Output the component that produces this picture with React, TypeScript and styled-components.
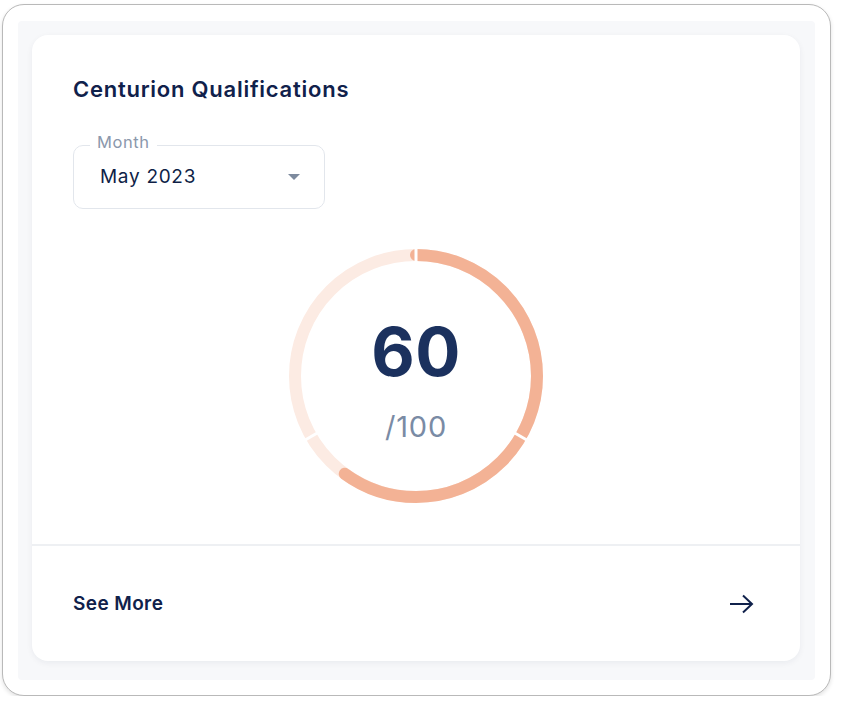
import styled, { createGlobalStyle } from "styled-components";

const GlobalStyle = createGlobalStyle`
  body {
    margin: 0;
    background: #ffffff;
    font-family: Inter, "Noto Sans", sans-serif;
  }
`;

const Frame = styled.div`
  box-sizing: border-box;
  width: 829px;
  height: 692px;
  margin: 4px 0 0 2px;
  padding: 16px 15px 15px 15px;
  border: 1.5px solid #b9b9b9;
  border-radius: 22px;
  background: #ffffff;
  box-shadow: 0 2px 4px rgba(0, 0, 0, 0.12);
`;

const Panel = styled.div`
  box-sizing: border-box;
  height: 100%;
  padding: 14px 15px 19px 14px;
  background: #f7f8fa;
  border-radius: 4px;
`;

const Card = styled.div`
  height: 100%;
  display: flex;
  flex-direction: column;
  background: #ffffff;
  border-radius: 16px;
  box-shadow: 0 2px 6px rgba(20, 35, 70, 0.06);
  overflow: hidden;
`;

const Body = styled.div`
  padding: 41px 41px 0 41px;
  display: flex;
  flex-direction: column;
  height: 509px;
  box-sizing: border-box;
`;

const Title = styled.h2`
  margin: 0;
  font-size: 22px;
  line-height: 26px;
  font-weight: 600;
  letter-spacing: 0.75px;
  color: #10214b;
`;

const Select = styled.div`
  position: relative;
  box-sizing: border-box;
  width: 252px;
  height: 64px;
  margin-top: 43px;
  padding: 0 24px 0 26px;
  display: flex;
  align-items: center;
  justify-content: space-between;
  border: 1px solid #e2e6ec;
  border-radius: 10px;
  background: #ffffff;
`;

const SelectLabel = styled.span`
  position: absolute;
  top: -14px;
  left: 16px;
  padding: 0 7px;
  background: #ffffff;
  font-size: 16.5px;
  line-height: 20px;
  letter-spacing: 0.6px;
  color: #8b98ac;
`;

const SelectValue = styled.span`
  font-size: 19px;
  line-height: 24px;
  letter-spacing: 0.7px;
  color: #0f1f47;
`;

const Caret = styled.span`
  width: 0;
  height: 0;
  border-left: 6px solid transparent;
  border-right: 6px solid transparent;
  border-top: 6px solid #7d8a9e;
`;

const GaugeWrap = styled.div`
  position: relative;
  align-self: center;
  width: 254px;
  height: 254px;
  margin-top: 40px;
`;

const GaugeText = styled.div`
  position: absolute;
  inset: 0;
  display: flex;
  flex-direction: column;
  align-items: center;
  justify-content: center;
`;

const Score = styled.div`
  font-size: 67px;
  line-height: 70px;
  font-weight: 700;
  letter-spacing: 0.5px;
  color: #1b315e;
  margin-top: 9px;
`;

const Total = styled.div`
  font-size: 29px;
  line-height: 34px;
  letter-spacing: 0.8px;
  color: #7a8ba5;
  margin-top: 23px;
`;

const Footer = styled.div`
  flex: 1;
  display: flex;
  align-items: center;
  justify-content: space-between;
  padding: 0 46px 0 41px;
  border-top: 2px solid #eef0f3;
`;

const FooterLink = styled.span`
  font-size: 19px;
  font-weight: 600;
  letter-spacing: 0.4px;
  color: #10214b;
`;

function Gauge({ value, max }: { value: number; max: number }) {
  const size = 254;
  const r = 121;
  const c = 2 * Math.PI * r;
  const progress = (value / max) * c;
  const cx = size / 2;
  const seps = [0, 120, 240];
  return (
    <svg width={size} height={size} viewBox={`0 0 ${size} ${size}`}>
      <circle cx={cx} cy={cx} r={r} fill="none" stroke="#fcebe3" strokeWidth={12} />
      <circle
        cx={cx}
        cy={cx}
        r={r}
        fill="none"
        stroke="#f3b295"
        strokeWidth={12}
        strokeLinecap="round"
        strokeDasharray={`${progress} ${c}`}
        transform={`rotate(-90 ${cx} ${cx})`}
      />
      {seps.map((a) => {
        const rad = (a * Math.PI) / 180;
        const x1 = cx + 112 * Math.sin(rad);
        const y1 = cx - 112 * Math.cos(rad);
        const x2 = cx + 130 * Math.sin(rad);
        const y2 = cx - 130 * Math.cos(rad);
        return <line key={a} x1={x1} y1={y1} x2={x2} y2={y2} stroke="#ffffff" strokeWidth={3} />;
      })}
    </svg>
  );
}

function Arrow() {
  return (
    <svg width="25" height="20" viewBox="0 0 25 20" fill="none">
      <path d="M1 10H23M14 1.5L23 10L14 18.5" stroke="#10214b" strokeWidth="2" />
    </svg>
  );
}

function App() {
  return (
    <>
      <GlobalStyle />
      <Frame>
        <Panel>
          <Card>
            <Body>
              <Title>Centurion Qualifications</Title>
              <Select>
                <SelectLabel>Month</SelectLabel>
                <SelectValue>May 2023</SelectValue>
                <Caret />
              </Select>
              <GaugeWrap>
                <Gauge value={60} max={100} />
                <GaugeText>
                  <Score>60</Score>
                  <Total>/100</Total>
                </GaugeText>
              </GaugeWrap>
            </Body>
            <Footer>
              <FooterLink>See More</FooterLink>
              <Arrow />
            </Footer>
          </Card>
        </Panel>
      </Frame>
    </>
  );
}

export default App;
